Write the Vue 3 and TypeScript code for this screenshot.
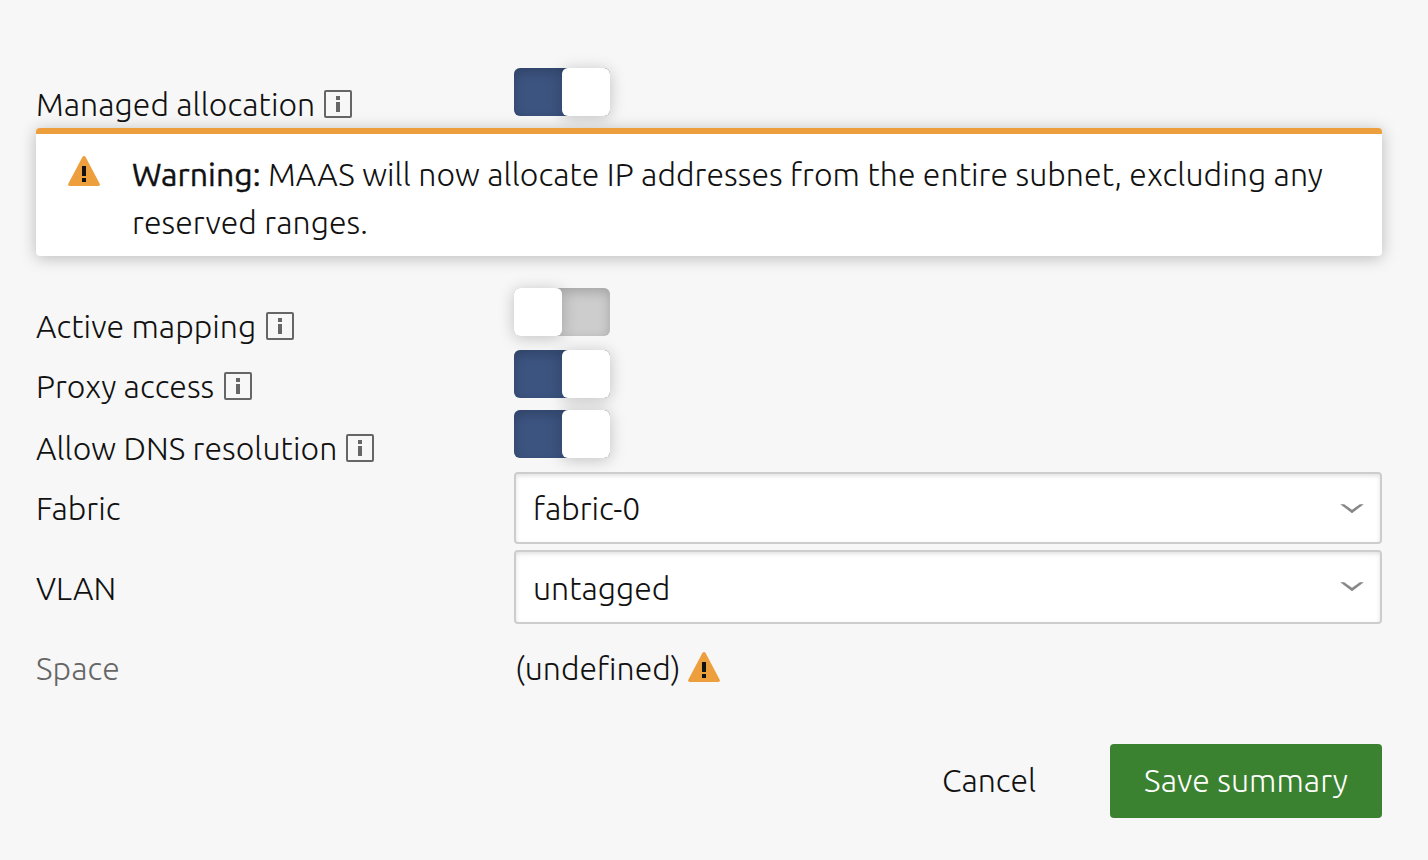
<script setup lang="ts">
import { ref } from 'vue'

interface Toggle {
  id: string
  label: string
  on: boolean
}

const managed = ref<Toggle>({ id: 'managed', label: 'Managed allocation', on: true })
const toggles = ref<Toggle[]>([
  { id: 'active', label: 'Active mapping', on: false },
  { id: 'proxy', label: 'Proxy access', on: true },
  { id: 'dns', label: 'Allow DNS resolution', on: true },
])
const selects = [
  { id: 'fabric', label: 'Fabric', value: 'fabric-0' },
  { id: 'vlan', label: 'VLAN', value: 'untagged' },
]
</script>

<template>
  <form class="summary" @submit.prevent>
    <div class="row managed">
      <div class="label">
        <span class="text">{{ managed.label }}</span>
        <svg class="info" viewBox="0 0 28 28"><rect x="1" y="1" width="26" height="26" rx="1" fill="none" stroke="#666" stroke-width="2" /><path d="M12 6h4v4h-4zM12 12h4v10h-4z" fill="#666" /></svg>
      </div>
      <button type="button" class="switch" :class="{ on: managed.on }" @click="managed.on = !managed.on"><i class="knob"></i></button>
    </div>

    <div class="notice">
      <svg class="warn" viewBox="0 0 32 30"><path d="M14.4 1Q16-.9 17.6 1L31.7 27.8Q32.5 30 30.4 30H1.6Q-.5 30 .3 27.8Z" fill="#ed9f3d" /><path d="M14 10h4v10h-4zM14 22h4v4h-4z" fill="#111" /></svg>
      <p class="message"><strong>Warning:</strong> MAAS will now allocate IP addresses from the entire subnet, excluding any<br />reserved ranges.</p>
    </div>

    <div v-for="t in toggles" :key="t.id" class="row" :class="t.id">
      <div class="label">
        <span class="text">{{ t.label }}</span>
        <svg class="info" viewBox="0 0 28 28"><rect x="1" y="1" width="26" height="26" rx="1" fill="none" stroke="#666" stroke-width="2" /><path d="M12 6h4v4h-4zM12 12h4v10h-4z" fill="#666" /></svg>
      </div>
      <button type="button" class="switch" :class="{ on: t.on }" @click="t.on = !t.on"><i class="knob"></i></button>
    </div>

    <div v-for="s in selects" :key="s.id" class="row" :class="s.id">
      <div class="label"><span class="text">{{ s.label }}</span></div>
      <div class="select">
        <span class="value">{{ s.value }}</span>
        <svg class="chevron" viewBox="0 0 24 10"><path d="M.2.2H4.2L12 5.8 19.8.2H23.8L12 9.2Z" fill="#888" /></svg>
      </div>
    </div>

    <div class="row space">
      <div class="label"><span class="text">Space</span></div>
      <div class="undefined">
        <span class="text">(undefined)</span>
        <svg class="warn" viewBox="0 0 32 30"><path d="M14.4 1Q16-.9 17.6 1L31.7 27.8Q32.5 30 30.4 30H1.6Q-.5 30 .3 27.8Z" fill="#ed9f3d" /><path d="M14 10h4v10h-4zM14 22h4v4h-4z" fill="#111" /></svg>
      </div>
    </div>

    <div class="actions">
      <button type="button" class="cancel"><span>Cancel</span></button>
      <button type="submit" class="save"><span>Save summary</span></button>
    </div>
  </form>
</template>

<style>
body {
  background: #f7f7f7;
}
</style>

<style scoped>
.summary {
  box-sizing: border-box;
  width: 1428px;
  height: 860px;
  padding: 68px 46px 0 36px;
  overflow: hidden;
  background: #f7f7f7;
  color: #111;
  font: 300 32px/48px Ubuntu, 'Open Sans', 'Noto Sans', sans-serif;
  white-space: nowrap;
}
button {
  padding: 0;
  border: 0;
  font: inherit;
  color: inherit;
}
svg {
  display: block;
  flex: none;
}
.row {
  display: grid;
  grid-template-columns: 478px 868px;
  align-items: start;
}
.label {
  display: flex;
  gap: 9px;
  padding-top: 12px;
  letter-spacing: 0.05px;
}
.active .label, .proxy .label { gap: 9.35px; }
.managed { height: 60px; }
.active { height: 62px; }
.proxy { height: 60px; }
.dns { height: 62px; }
.fabric { height: 78px; }
.vlan { height: 74px; }
.space { height: 120px; }
.active .label, .dns .label, .vlan .label { padding-top: 14px; }
.info {
  width: 28px;
  height: 28px;
  margin-top: 10px;
}
.switch {
  display: block;
  width: 96px;
  height: 48px;
  border-radius: 6px;
  background: #cdcdcd;
  box-shadow: inset 0 4px 12px rgba(0, 0, 0, 0.2);
}
.switch.on {
  background: #3c5480;
}
.knob {
  display: block;
  width: 48px;
  height: 48px;
  border-radius: 6px;
  background: #fff;
  box-shadow: 0 2px 16px rgba(0, 0, 0, 0.22);
}
.on .knob {
  margin-left: 48px;
}
.notice {
  position: relative;
  box-sizing: border-box;
  display: flex;
  height: 128px;
  margin-bottom: 32px;
  padding: 16px 32px 0;
  border-top: 6px solid #ed9f3d;
  border-radius: 4px;
  background: #fff;
  box-shadow: 0 2px 16px rgba(0, 0, 0, 0.25);
}
.warn {
  width: 32px;
  height: 30px;
}
.notice .warn {
  margin: 6px 32px 0 0;
}
.message {
  margin: 0;
  letter-spacing: 0.065px;
}
strong {
  font-weight: 400;
  -webkit-text-stroke: 0.4px currentColor;
}
.select {
  box-sizing: border-box;
  display: flex;
  align-items: flex-start;
  justify-content: space-between;
  height: 72px;
  padding: 10px 16px 0 17px;
  border: 2px solid #cdcdcd;
  border-radius: 4px;
  background: #fff;
  box-shadow: inset 0 2px 4px rgba(0, 0, 0, 0.12);
}
.vlan .select {
  height: 74px;
  padding-top: 12px;
}
.chevron {
  width: 24px;
  height: 10px;
  margin-top: 20px;
}
.vlan .chevron {
  margin-top: 18px;
}
.space .label {
  padding-top: 20px;
  color: #666;
}
.undefined {
  display: flex;
  gap: 7px;
  padding: 20px 0 0 1px;
}
.undefined .warn {
  margin-top: 8px;
}
.actions {
  display: flex;
  justify-content: flex-end;
}
.cancel {
  width: 168px;
  height: 74px;
  margin-right: 37px;
  padding-bottom: 2px;
  background: transparent;
}
.save {
  width: 272px;
  height: 74px;
  padding-bottom: 2px;
  border-radius: 4px;
  background: #3a8230;
  color: #fff;
  letter-spacing: 0.05px;
}
</style>
